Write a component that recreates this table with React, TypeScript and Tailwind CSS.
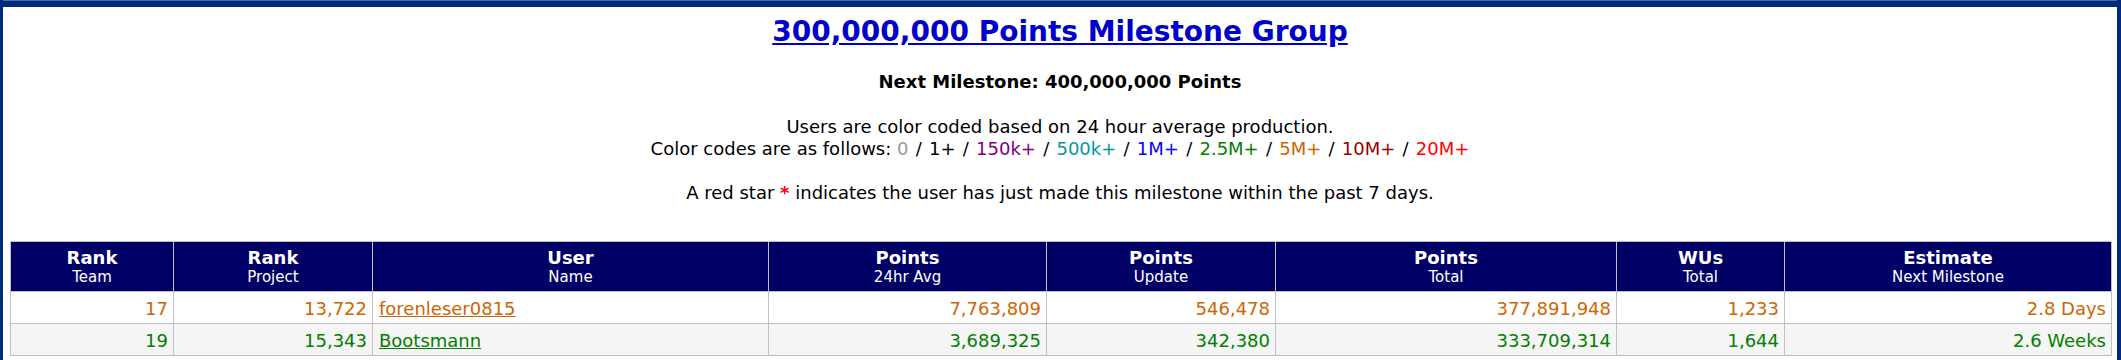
const colorCodes = [
  { label: "0", color: "text-[#999999]" },
  { label: "1+", color: "text-black" },
  { label: "150k+", color: "text-[#800080]" },
  { label: "500k+", color: "text-[#009999]" },
  { label: "1M+", color: "text-[#0000ff]" },
  { label: "2.5M+", color: "text-[#008000]" },
  { label: "5M+", color: "text-[#cc6600]" },
  { label: "10M+", color: "text-[#990000]" },
  { label: "20M+", color: "text-[#ff0000]" },
];

const columns = [
  { title: "Rank", sub: "Team", width: "w-[163px]" },
  { title: "Rank", sub: "Project", width: "w-[199px]" },
  { title: "User", sub: "Name", width: "w-[396px]" },
  { title: "Points", sub: "24hr Avg", width: "w-[278px]" },
  { title: "Points", sub: "Update", width: "w-[229px]" },
  { title: "Points", sub: "Total", width: "w-[341px]" },
  { title: "WUs", sub: "Total", width: "w-[168px]" },
  { title: "Estimate", sub: "Next Milestone", width: "w-[327px]" },
];

const users = [
  {
    rankTeam: "17",
    rankProject: "13,722",
    name: "forenleser0815",
    avg: "7,763,809",
    update: "546,478",
    total: "377,891,948",
    wus: "1,233",
    estimate: "2.8 Days",
    color: "text-[#cc6600]",
    bg: "bg-white",
  },
  {
    rankTeam: "19",
    rankProject: "15,343",
    name: "Bootsmann",
    avg: "3,689,325",
    update: "342,380",
    total: "333,709,314",
    wus: "1,644",
    estimate: "2.6 Weeks",
    color: "text-[#008000]",
    bg: "bg-[#f5f5f5]",
  },
];

const cell = "border border-[#c0c0c0] text-right pl-[6px] pr-[5px] pt-[6px] pb-[3px] leading-[22px]";

export default function App() {
  return (
    <div className="min-h-screen bg-white border-l-[3px] border-r-4 border-[#002a7a] font-['DejaVu_Sans',Verdana,sans-serif] text-black">
      {/* top bar */}
      <div className="h-[7px] bg-[#002a7a] border-t border-[#4d6ea8]"></div>

      <div className="text-center">
        <a href="#" className="block mt-[8px] text-[28px] leading-[33px] font-bold text-[#0000cc] underline">
          300,000,000 Points Milestone Group
        </a>
        <div className="mt-[23px] text-[18px] leading-[22px] font-bold">
          Next Milestone: 400,000,000 Points
        </div>
        <div className="mt-[23px] text-[18px] leading-[22px]">
          <div>Users are color coded based on 24 hour average production.</div>
          <div>
            Color codes are as follows:{" "}
            {colorCodes.map((c, i) => (
              <span key={c.label}>
                <span className={c.color}>{c.label}</span>
                {i < colorCodes.length - 1 && <span className="mx-[1.5px]"> / </span>}
              </span>
            ))}
          </div>
          <div className="mt-[22px]">
            A red star <span className="text-[#ff0000] font-bold">*</span> indicates the user has just made this
            milestone within the past 7 days.
          </div>
        </div>
      </div>

      {/* milestone table */}
      <div className="mt-[37px] pl-[7px] pr-[6px]">
        <table className="w-full table-fixed border-collapse text-[18px]">
          <colgroup>
            {columns.map((c, i) => (
              <col key={i} className={c.width} />
            ))}
          </colgroup>
          <thead>
            <tr className="bg-[#000066] text-white">
              {columns.map((c, i) => (
                <th key={i} className="border border-[#c0c0c0] pt-[5px] pb-[5px] font-normal">
                  <div className="text-[18px] leading-[21px] font-bold">{c.title}</div>
                  <div className="text-[15px] leading-[18px]">{c.sub}</div>
                </th>
              ))}
            </tr>
          </thead>
          <tbody>
            {users.map((u) => (
              <tr key={u.name} className={`${u.bg} ${u.color}`}>
                <td className={cell}>{u.rankTeam}</td>
                <td className={cell}>{u.rankProject}</td>
                <td className="border border-[#c0c0c0] text-left pl-[6px] pr-[6px] pt-[6px] pb-[3px] leading-[22px]">
                  <a href="#" className="underline">
                    {u.name}
                  </a>
                </td>
                <td className={cell}>{u.avg}</td>
                <td className={cell}>{u.update}</td>
                <td className={cell}>{u.total}</td>
                <td className={cell}>{u.wus}</td>
                <td className={cell}>{u.estimate}</td>
              </tr>
            ))}
          </tbody>
        </table>
      </div>
    </div>
  );
}
